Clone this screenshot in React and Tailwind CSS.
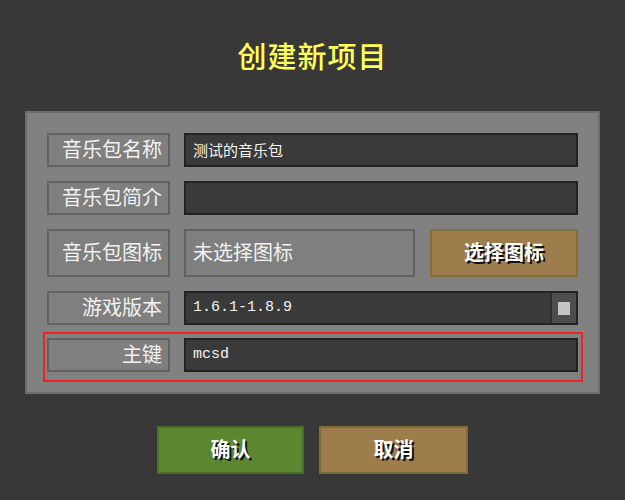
import React from 'react';

const cjk = "font-['Noto_Sans_CJK_SC',sans-serif]";
const mono = "font-['Liberation_Mono',monospace]";

// =========================================
// Label cell (left column)
// =========================================
const FieldLabel = ({ children, tall = false }) => (
    <div
        className={`w-[123px] shrink-0 ${tall ? 'h-[48px]' : 'h-[34px]'} border-2 border-[#626262] bg-[#7f7f7f] flex items-center justify-end pr-[6px] pb-[3px] text-[20px] leading-none text-[#f2f2f2] ${cjk}`}
    >
        {children}
    </div>
);

// =========================================
// Dark text input
// =========================================
const DarkInput = ({ value, monoText = false, withScroll = false }) => (
    <div className="flex-1 h-[34px] border-2 border-[#222222] bg-[#3a3a3a] flex items-center">
        <span
            className={`flex-1 pl-[7px] pb-[2px] text-[#f4f4f4] leading-none ${monoText ? `${mono} text-[15px]` : `${cjk} text-[15px]`}`}
        >
            {value}
        </span>
        {withScroll && (
            <div className="w-[26px] h-full bg-[#4d4d4d] border-l-2 border-[#2e2e2e] flex items-center justify-center">
                <div className="w-[12px] h-[13px] bg-[#c4c4c4]" />
            </div>
        )}
    </div>
);

const Row = ({ children }) => (
    <div className="flex items-center gap-[14px]">{children}</div>
);

export default function App() {
    return (
        <div className={`w-[625px] h-[500px] bg-[#383838] flex flex-col items-center pt-[36px] ${cjk}`}>
            <h1 className="h-[40px] flex items-center text-[29px] font-medium text-[#ffff55] tracking-[1px]">
                创建新项目
            </h1>

            <div className="mt-[35px] w-[575px] border-2 border-[#6d6d6d] bg-[#818181] px-[20px] pt-[20px] pb-[10px] flex flex-col gap-[14px]">
                <Row>
                    <FieldLabel>音乐包名称</FieldLabel>
                    <DarkInput value="测试的音乐包" />
                </Row>
                <Row>
                    <FieldLabel>音乐包简介</FieldLabel>
                    <DarkInput value="" />
                </Row>
                <Row>
                    <FieldLabel tall>音乐包图标</FieldLabel>
                    <div className="w-[231px] h-[48px] border-2 border-[#626262] bg-[#7f7f7f] flex items-center pl-[7px] pb-[3px] text-[20px] text-[#f2f2f2] leading-none">
                        未选择图标
                    </div>
                    <button className="ml-[1px] flex-1 h-[48px] border-2 border-[#8a6c3c] bg-[#9c7d4b] pb-[2px] text-[20px] font-bold text-white leading-none [text-shadow:2px_2px_0_#111]">
                        选择图标
                    </button>
                </Row>
                <Row>
                    <FieldLabel>游戏版本</FieldLabel>
                    <DarkInput value="1.6.1-1.8.9" monoText withScroll />
                </Row>
                <div className="-ml-[4px] -mr-[5px] -mt-[7px] border-2 border-[#ee2222] pl-[2px] pr-[3px] pt-[4px] pb-[8px]">
                    <Row>
                        <FieldLabel>主键</FieldLabel>
                        <DarkInput value="mcsd" monoText />
                    </Row>
                </div>
            </div>

            <div className="mt-[32px] flex gap-[15px]">
                <button className="w-[147px] h-[48px] border-2 border-[#4b6e28] bg-[#5b8731] pb-[2px] text-[20px] font-bold text-white leading-none [text-shadow:2px_2px_0_#111]">
                    确认
                </button>
                <button className="w-[149px] h-[48px] border-2 border-[#866838] bg-[#9c7d4b] pb-[2px] text-[20px] font-bold text-white leading-none [text-shadow:2px_2px_0_#111]">
                    取消
                </button>
            </div>
        </div>
    );
}
